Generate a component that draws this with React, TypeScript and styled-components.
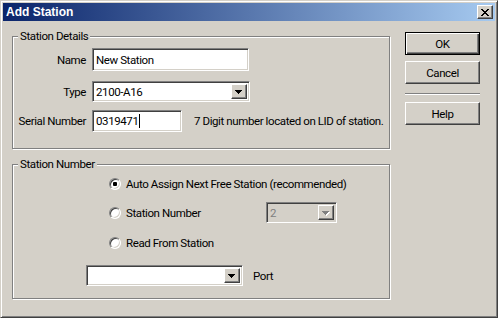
import styled, { createGlobalStyle, css } from 'styled-components';

const GlobalStyle = createGlobalStyle`
  html, body {
    margin: 0;
    padding: 0;
    background: #d4d0c8;
  }

  body {
    font-family: Roboto, 'Liberation Sans', Arial, sans-serif;
    font-size: 11.5px;
    letter-spacing: -0.4px;
    color: #000;
  }
`;

const raised = css`
  border: 1px solid;
  border-color: #fff #404040 #404040 #fff;
  box-shadow: inset -1px -1px 0 #808080;
`;

const sunken = css`
  border: 1px solid;
  border-color: #808080 #fff #fff #808080;
  box-shadow: inset 1px 1px 0 #404040, inset -1px -1px 0 #d4d0c8;
`;

const Window = styled.div`
  box-sizing: border-box;
  width: 498px;
  height: 318px;
  display: flex;
  flex-direction: column;
  padding: 2px;
  background: #d4d0c8;
  border: 1px solid;
  border-color: #d4d0c8 #404040 #404040 #d4d0c8;
  box-shadow: inset 1px 1px 0 #fff, inset -1px -1px 0 #808080;
`;

const TitleBar = styled.div`
  height: 18px;
  display: flex;
  align-items: center;
  justify-content: space-between;
  padding: 0 2px 0 3px;
  background: linear-gradient(to right, #0a246a, #a6caf0);
`;

const Title = styled.span`
  font-family: 'Liberation Sans', Arial, sans-serif;
  font-size: 12px;
  font-weight: bold;
  letter-spacing: 0;
  color: #fff;
`;

const CloseButton = styled.div`
  box-sizing: border-box;
  width: 16px;
  height: 14px;
  display: flex;
  align-items: center;
  justify-content: center;
  padding-right: 1px;
  background: #d4d0c8;
  ${raised}
`;

const Body = styled.div`
  flex: 1;
  display: flex;
  align-items: flex-start;
  padding: 8px 0 0 9px;
`;

const LeftColumn = styled.div`
  width: 378px;
  flex-shrink: 0;
  display: flex;
  flex-direction: column;
  gap: 8px;
`;

const Group = styled.fieldset<{ $height: number }>`
  box-sizing: border-box;
  width: 378px;
  min-width: 0;
  height: ${({ $height }) => $height}px;
  margin: 0;
  padding: 0;
  border: 1px solid #808080;
  box-shadow: 1px 1px 0 #fff, inset 1px 1px 0 #fff;
`;

const Legend = styled.legend`
  margin-left: 5px;
  padding: 0 2px;
  line-height: 14px;
  background: #d4d0c8;
`;

const DetailsBody = styled.div`
  display: flex;
  flex-direction: column;
  padding-top: 5px;
`;

const FieldRow = styled.div<{ $mt?: number }>`
  display: flex;
  align-items: center;
  gap: 6px;
  margin-top: ${({ $mt = 0 }) => $mt}px;
`;

const Label = styled.span`
  width: 73px;
  flex-shrink: 0;
  text-align: right;
  white-space: nowrap;
`;

const Hint = styled.span`
  margin-left: 6px;
  white-space: nowrap;
`;

const TextField = styled.div<{ $width: number; $height: number }>`
  box-sizing: border-box;
  width: ${({ $width }) => $width}px;
  height: ${({ $height }) => $height}px;
  flex-shrink: 0;
  display: flex;
  align-items: center;
  padding-left: 3px;
  background: #fff;
  ${sunken}
`;

const Caret = styled.span`
  width: 1px;
  height: 14px;
  margin-left: 1px;
  background: #000;
`;

const Combo = styled.div<{ $width: number; $disabled?: boolean }>`
  box-sizing: border-box;
  width: ${({ $width }) => $width}px;
  height: 21px;
  flex-shrink: 0;
  display: flex;
  align-items: stretch;
  padding: 2px;
  background: ${({ $disabled }) => ($disabled ? '#d4d0c8' : '#fff')};
  color: ${({ $disabled }) => ($disabled ? '#808080' : '#000')};
  ${sunken}
`;

const ComboText = styled.span`
  flex: 1;
  display: flex;
  align-items: center;
  padding-left: 1px;
`;

const DropButton = styled.div`
  box-sizing: border-box;
  width: 16px;
  display: flex;
  align-items: center;
  justify-content: center;
  padding: 1px 1px 0 0;
  background: #d4d0c8;
  ${raised}
`;

const NumberBody = styled.div`
  display: flex;
  flex-direction: column;
  padding: 3px 0 0 96px;
`;

const RadioRow = styled.div<{ $mt?: number; $height?: number }>`
  height: ${({ $height = 20 }) => $height}px;
  display: flex;
  align-items: center;
  margin-top: ${({ $mt = 0 }) => $mt}px;
`;

const RadioLabel = styled.label<{ $width?: number }>`
  display: flex;
  align-items: center;
  gap: 5px;
  white-space: nowrap;
  ${({ $width }) => $width && `width: ${$width}px;`}
`;

const RadioDot = styled.span<{ $checked?: boolean }>`
  position: relative;
  box-sizing: border-box;
  width: 12px;
  height: 12px;
  border-radius: 50%;
  background: #fff;
  border: 1px solid;
  border-color: #808080 #fff #fff #808080;
  box-shadow: inset 1px 1px 0 #404040, inset -1px -1px 0 #d4d0c8;

  ${({ $checked }) =>
    $checked &&
    css`
      &::after {
        content: '';
        position: absolute;
        left: 3px;
        top: 3px;
        width: 4px;
        height: 4px;
        border-radius: 1px;
        background: #000;
      }
    `}
`;

const PortRow = styled.div`
  display: flex;
  align-items: center;
  gap: 10px;
  margin: 12px 0 0 -23px;
`;

const RightColumn = styled.div`
  width: 75px;
  flex-shrink: 0;
  display: flex;
  flex-direction: column;
  margin: 3px 0 0 15px;
`;

const Button = styled.div<{ $default?: boolean; $mt?: number }>`
  box-sizing: border-box;
  height: 23px;
  display: flex;
  align-items: center;
  justify-content: center;
  margin-top: ${({ $mt = 0 }) => $mt}px;
  background: #d4d0c8;
  ${({ $default }) =>
    $default
      ? css`
          border: 1px solid #000;
          box-shadow: inset 1px 1px 0 #fff, inset -1px -1px 0 #404040, inset -2px -2px 0 #808080;
        `
      : raised}
`;

const Separator = styled.div`
  height: 1px;
  margin: 9px 0 8px;
  background: #808080;
  box-shadow: 0 1px 0 #fff;
`;

function Arrow({ disabled }: { disabled?: boolean }) {
  const d = 'M0 0h7v1H0zM1 1h5v1H1zM2 2h3v1H2zM3 3h1v1H3z';
  return (
    <svg width='8' height='5' viewBox='0 0 8 5' shapeRendering='crispEdges'>
      {disabled && <path d={d} fill='#fff' transform='translate(1 1)' />}
      <path d={d} fill={disabled ? '#808080' : '#000'} />
    </svg>
  );
}

function CloseGlyph() {
  return (
    <svg width='8' height='7' viewBox='0 0 8 7' shapeRendering='crispEdges'>
      <path
        d='M0 0h2v1H0zM6 0h2v1H6zM1 1h2v1H1zM5 1h2v1H5zM2 2h4v1H2zM3 3h2v1H3zM2 4h4v1H2zM1 5h2v1H1zM5 5h2v1H5zM0 6h2v1H0zM6 6h2v1H6z'
        fill='#000'
      />
    </svg>
  );
}

function ComboBox({ width, value, disabled }: { width: number; value?: string; disabled?: boolean }) {
  return (
    <Combo $width={width} $disabled={disabled}>
      <ComboText>{value}</ComboText>
      <DropButton>
        <Arrow disabled={disabled} />
      </DropButton>
    </Combo>
  );
}

function Radio({ label, checked, width }: { label: string; checked?: boolean; width?: number }) {
  return (
    <RadioLabel $width={width}>
      <RadioDot $checked={checked} />
      {label}
    </RadioLabel>
  );
}

export default function App() {
  return (
    <>
      <GlobalStyle />
      <Window>
        <TitleBar>
          <Title>Add Station</Title>
          <CloseButton>
            <CloseGlyph />
          </CloseButton>
        </TitleBar>

        <Body>
          <LeftColumn>
            <Group $height={120}>
              <Legend>Station Details</Legend>
              <DetailsBody>
                <FieldRow>
                  <Label>Name</Label>
                  <TextField $width={157} $height={23}>
                    New Station
                  </TextField>
                </FieldRow>
                <FieldRow $mt={10}>
                  <Label>Type</Label>
                  <ComboBox width={158} value='2100-A16' />
                </FieldRow>
                <FieldRow $mt={8}>
                  <Label>Serial Number</Label>
                  <TextField $width={90} $height={22}>
                    0319471
                    <Caret />
                  </TextField>
                  <Hint>7 Digit number located on LID of station.</Hint>
                </FieldRow>
              </DetailsBody>
            </Group>

            <Group $height={142}>
              <Legend>Station Number</Legend>
              <NumberBody>
                <RadioRow>
                  <Radio label='Auto Assign Next Free Station (recommended)' checked />
                </RadioRow>
                <RadioRow $mt={8} $height={21}>
                  <Radio label='Station Number' width={157} />
                  <ComboBox width={71} value='2' disabled />
                </RadioRow>
                <RadioRow $mt={10}>
                  <Radio label='Read From Station' />
                </RadioRow>
                <PortRow>
                  <ComboBox width={157} />
                  <span>Port</span>
                </PortRow>
              </NumberBody>
            </Group>
          </LeftColumn>

          <RightColumn>
            <Button $default>OK</Button>
            <Button $mt={6}>Cancel</Button>
            <Separator />
            <Button>Help</Button>
          </RightColumn>
        </Body>
      </Window>
    </>
  );
}
